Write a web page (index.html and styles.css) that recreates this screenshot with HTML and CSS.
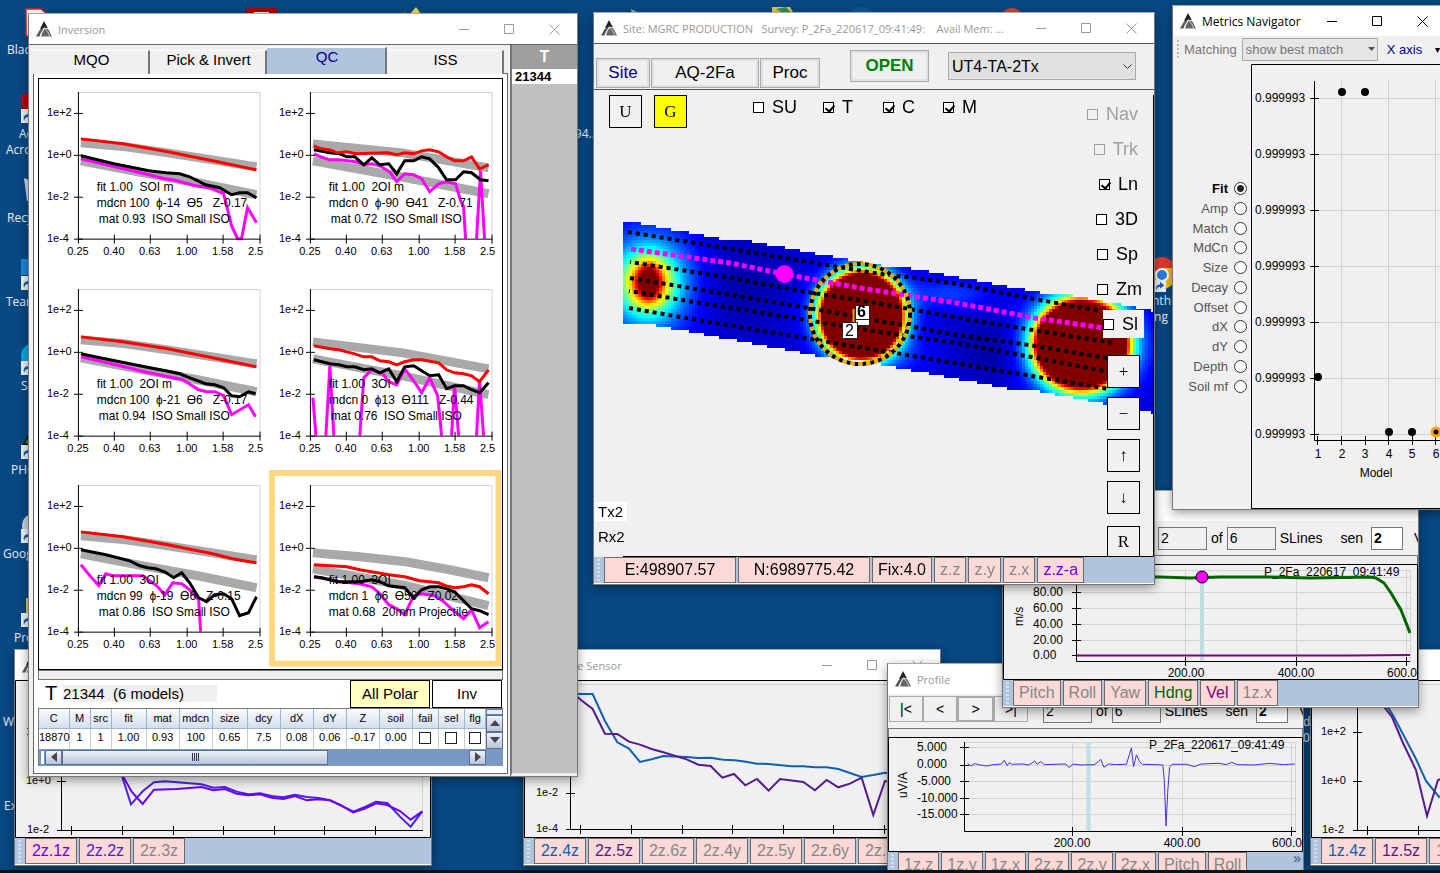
FILE: index.html
```
<!DOCTYPE html>
<html lang="en">
<head>
<meta charset="utf-8">
<title>Survey workspace</title>
<link rel="stylesheet" href="styles.css">
</head>
<body>
<svg class="defs" aria-hidden="true">
  <symbol id="logo" viewBox="0 0 16 16"><path d="M8 0L12 7.500L8.500 6.500L5 8.500L4.200 7.500Z" fill="#222"/><path d="M4 8.500L8.500 7.300Q5 10 3.500 15.500H0Z" fill="#555"/><path d="M9 7.500L12.500 8.500L16 15.500H5Q6 10.500 9 7.500Z" fill="#666"/><path d="M9 8Q12 10 14 15.500" fill="none" stroke="#ddd" stroke-width=".8"/></symbol>
  <symbol id="min" viewBox="0 0 11 11"><path d="M0 5.500H10" stroke="currentColor"/></symbol>
  <symbol id="max" viewBox="0 0 11 11"><path d="M.5 .5H9.500V9.500H.5Z" fill="none" stroke="currentColor"/></symbol>
  <symbol id="close" viewBox="0 0 11 11"><path d="M.5 .5L10.500 10.500M10.500 .5L.5 10.500" stroke="currentColor"/></symbol>
  <symbol id="shortcut" viewBox="0 0 14 14"><path d="M0 0H14V14H0Z" fill="#eef2f6"/><path d="M3 12Q1 6 7 5V2L12 6.500L7 10V8Q4 8 3 12Z" fill="#1d5f9f"/></symbol>
</svg>

<main class="desktop">
  <svg class="wallpaper-icons" viewBox="0 0 1440 873" width="1440" height="873" aria-hidden="true">
    <path d="M26 9H41L48 15V36H26Z" fill="#fff" stroke="#d22" stroke-width="1.500"/>
    <path d="M246 8H277V14H246Z" fill="#b00000"/><path d="M254 12H269V14H254Z" fill="#eee"/>
    <path d="M410 14L416 7L421 14Z" fill="#f0d840"/><path d="M401 14L405 12L407 14Z" fill="#d07a20"/>
    <path d="M631 9L641 14H632Z" fill="#9bb"/><path d="M772 7H790L794 14H772Z" fill="#e8c440"/><path d="M776 9L786 7L792 14H785Z" fill="#3b8f4a"/>
    <circle cx="862" cy="22" r="15" fill="#0a5a92"/><circle cx="1012" cy="20" r="12" fill="#e33b2e"/>
    <path d="M22 98Q22 93 28 93V110H22Z" fill="#b00"/><use href="#shortcut" x="21" y="109" width="14" height="14"/>
    <path d="M24 178L29 180V201H27Z" fill="#cde"/><path d="M21 259H29V275H21Z" fill="#1a86dd"/><use href="#shortcut" x="21" y="276" width="14" height="14"/>
    <circle cx="34" cy="356" r="13" fill="#00a8e8"/><use href="#shortcut" x="21" y="361" width="14" height="14"/>
    <path d="M22 446L29 433V446Z" fill="#111"/><path d="M25 443L29 437V444Z" fill="#3c8b20"/><use href="#shortcut" x="21" y="445" width="14" height="14"/>
    <circle cx="35" cy="526" r="13" fill="#ccd3da"/><use href="#shortcut" x="21" y="529" width="14" height="14"/>
    <path d="M26 598H30V616H26Z" fill="#e8c860"/><use href="#shortcut" x="21" y="613" width="14" height="14"/>
    <circle cx="1162" cy="275" r="14" fill="#f2bd1d"/><path d="M1148 275A14 14 0 0 1 1176 268H1162Z" fill="#e33b2e"/><circle cx="1162" cy="275" r="6" fill="#2c7de0" stroke="#fff" stroke-width="2"/>
    <use href="#shortcut" x="1154" y="280" width="12" height="12"/>
    <g class="icon-labels">
      <text x="7" y="54">Blackb</text><text x="19" y="138">Ad</text><text x="6" y="154">Acrob</text><text x="7" y="222">Recycle</text>
      <text x="6" y="306">Team</text><text x="21" y="390">Sk</text><text x="11" y="474">PHO</text><text x="3" y="558">Google</text>
      <text x="14" y="642">Pro</text><text x="3" y="726">W</text><text x="4" y="810">Ex</text>
      <text x="568" y="138">194...</text><text x="1146" y="305">ynth</text><text x="1151" y="321">ing</text><text x="1303" y="726">d</text><text x="1303" y="742">0</text>
    </g>
  </svg>

  <section class="window w-left">
    <header class="titlebar"><svg class="logo"><use href="#logo"/></svg><h2>Dual Sensor</h2></header>
    <svg class="plot" viewBox="15 680 416 158">
      <path class="frame" d="M15.500 680.500H430.500V837.500H15.500Z"/>
      <path class="light" d="M422.500 685V829"/>
      <path class="axis" d="M61.500 685V830.500H423M57 732.500H66M57 781.500H66M57 830.500H66M71.500 826V835M122.500 826V835M173.500 826V835M223.500 826V835M274.500 826V835M324.500 826V835M375.500 826V835"/>
      <text x="26" y="735">1e+2</text><text x="26" y="784">1e+0</text><text x="27" y="833">1e-2</text>
      <g class="trace" transform="translate(0 670) scale(.3333)">
        <polyline stroke="#4a22dd" points="360,290 368,325 393,403 428,364 462,337 495,334 605,343 640,353 675,351 710,365 745,373 780,370 815,378 850,382 885,374 920,381 955,384 990,391 1023,406 1060,425 1095,411 1128,395 1162,399 1200,440 1232,470 1267,424"/>
        <polyline stroke="#6a00ff" points="360,290 370,320 395,365 428,402 462,359 530,357 605,351 640,361 675,357 710,371 745,376 780,373 815,383 850,387 885,378 920,391 955,388 990,391 1023,406 1060,427 1095,416 1128,400 1162,405 1200,423 1232,449 1267,424"/>
      </g>
    </svg>
    <div class="strip"><i class="grip"></i><button class="chip w52 c-violet">2z.1z</button><button class="chip w52 c-indigo">2z.2z</button><button class="chip w52">2z.3z</button></div>
  </section>

  <section class="window w-sensor">
    <header class="titlebar"><svg class="logo"><use href="#logo"/></svg><h2>Single Sensor</h2>
      <div class="controls"><button aria-label="Minimize"><svg><use href="#min"/></svg></button><button aria-label="Maximize"><svg><use href="#max"/></svg></button><button aria-label="Close"><svg><use href="#close"/></svg></button></div></header>
    <svg class="plot" viewBox="524 680 416 158">
      <path class="frame" d="M524.500 680.500H939.500V837.500H524.500Z"/>
      <path class="light" d="M571 684.500H940"/>
      <path class="axis" d="M570.500 685V829.500H940M566 793.500H575M566 829.500H571M580.500 825V834M631.500 825V834M682.500 825V834M732.500 825V834M783.500 825V834M833.500 825V834M884.500 825V834"/>
      <text x="536" y="796">1e-2</text><text x="536" y="832">1e-4</text>
      <g class="trace" transform="translate(430 640) scale(.3333)">
        <polyline stroke="#1160ae" points="380,162 488,162 525,243 562,307 597,326 630,366 665,358 700,348 770,351 805,354 842,353 880,359 915,361 948,365 980,371 1015,372 1085,379 1120,379 1155,382 1190,382 1225,387 1295,411 1330,405 1365,398 1400,403"/>
        <polyline stroke="#551a8b" points="430,160 453,180 488,207 525,281 562,282 597,305 630,314 665,327 700,337 770,358 805,374 842,378 877,413 912,402 946,436 981,417 1016,452 1050,417 1120,426 1155,451 1190,420 1225,442 1260,431 1295,413 1330,525 1365,423 1400,428"/>
      </g>
    </svg>
    <div class="strip"><i class="grip"></i><button class="chip w52 c-blue">2z.4z</button><button class="chip w52 c-purple">2z.5z</button><button class="chip w52">2z.6z</button><button class="chip w52">2z.4y</button><button class="chip w52">2z.5y</button><button class="chip w52">2z.6y</button><button class="chip w52">2z.4x</button></div>
  </section>

  <section class="window w-right">
    <header class="titlebar"></header>
    <svg class="plot" viewBox="1311 680 416 158">
      <path class="frame" d="M1311.500 680.500H1726V837.500H1311.500Z"/>
      <path class="light" d="M1358 684.500H1700"/>
      <path class="axis" d="M1357.500 685V830.500H1700M1353 732.500H1362M1353 781.500H1362M1353 830.500H1358M1367.500 826V835M1418.500 826V835"/>
      <text x="1321" y="735">1e+2</text><text x="1321" y="784">1e+0</text><text x="1322" y="833">1e-2</text>
      <polyline class="line2" stroke="#1160ae" points="1380,700 1389,709 1394,717 1416,759 1426,781 1439,797 1450,790"/>
      <polyline class="line2" stroke="#551a8b" points="1380,700 1385,708 1392,717 1403,743 1416,770 1427,816 1438,780 1450,776"/>
    </svg>
    <div class="strip"><i class="grip"></i><button class="chip w52 c-blue">1z.4z</button><button class="chip w52 c-purple">1z.5z</button><button class="chip w52">1z.6z</button></div>
  </section>

  <section class="window w-profile-a">
    <header class="titlebar"><svg class="logo"><use href="#logo"/></svg><h2>Profile</h2></header>
    <div class="nav">
      <div class="steps"><button>|&lt;</button><button>&lt;</button><button class="focus">&gt;</button><button>&gt;|</button></div>
      <input class="num" value="2" aria-label="Line"><span>of</span><input class="num" value="6" aria-label="Total"><span>SLines</span><label class="sen" for="sen-a">sen</label><input id="sen-a" class="num sensor" value="2"><span class="cut">V</span>
    </div>
    <div class="splitter"></div>
    <svg class="plot" viewBox="888 737 415 115">
      <path class="frame" d="M888.500 737.500H1302.500V851.500H888.500Z"/>
      <path class="light" d="M965 742.500H1296M1295.500 742V831M965 747.500H1296M965 765.500H1296M965 781.500H1296M965 798.500H1296M965 814.500H1296M1072.500 742V831M1182.500 742V831M1291.500 742V831"/>
      <path class="cursor" d="M1088.500 742V831"/>
      <path class="axis" d="M964.500 742V831.500H1296M960 747.500H969M960 765.500H969M960 781.500H969M960 798.500H969M960 814.500H969M1072.500 827V836M1182.500 827V836M1291.500 827V836"/>
      <g class="big"><text x="917" y="751">5.000</text><text x="917" y="768">0.000</text><text x="917" y="785">-5.000</text><text x="917" y="802">-10.000</text><text x="917" y="818">-15.000</text>
      <text x="1072" y="847" text-anchor="middle">200.00</text><text x="1182" y="847" text-anchor="middle">400.00</text><text x="1272" y="847">600.00</text>
      <text x="1149" y="749">P_2Fa_220617_09:41:49</text><text transform="translate(907 798) rotate(-90)">uV/A</text></g>
      <g class="trace thin" transform="translate(880 480) scale(.3571 .3333)"><polyline stroke="#4b2bd8" points="245,850 255,858 265,851 280,855 300,858 310,855 340,852 348,841 356,857 362,848 370,853 400,852 415,855 425,850 433,843 440,853 450,845 460,854 520,852 530,863 540,852 560,855 600,854 612,845 618,838 627,862 640,852 660,854 690,853 698,825 704,804 710,860 718,825 727,845 735,853 770,854 792,855 796,900 801,1038 806,930 811,862 818,853 860,853 880,860 900,852 950,850 970,854 985,847 1000,854 1050,855 1090,850 1130,854 1162,852"/></g>
    </svg>
    <div class="strip"><i class="grip"></i><button class="chip">1z.z</button><button class="chip">1z.y</button><button class="chip">1z.x</button><button class="chip">2z.z</button><button class="chip">2z.y</button><button class="chip">2z.x</button><button class="chip">Pitch</button><button class="chip">Roll</button><span class="more">»</span></div>
  </section>

  <section class="window w-profile-b">
    <header class="titlebar"><svg class="logo"><use href="#logo"/></svg><h2>Profile</h2></header>
    <div class="nav">
      <div class="steps"><button>|&lt;</button><button>&lt;</button><button class="focus">&gt;</button><button>&gt;|</button></div>
      <input class="num" value="2" aria-label="Line"><span>of</span><input class="num" value="6" aria-label="Total"><span>SLines</span><label class="sen" for="sen-b">sen</label><input id="sen-b" class="num sensor" value="2"><span class="cut">V</span>
    </div>
    <div class="splitter"></div>
    <svg class="plot" viewBox="1003 564 415 116">
      <path class="frame" d="M1003.500 564.500H1417.500V679.500H1003.500Z"/>
      <path class="light" d="M1077 570.500H1410M1410.500 570V661M1077 577.500H1410M1077 592.500H1410M1077 608.500H1410M1077 624.500H1410M1077 640.500H1410M1077 655.500H1410M1185.500 570V661M1296.500 570V661M1406.500 570V661"/>
      <path class="cursor" d="M1202 570V661"/>
      <path class="axis" d="M1076.500 570V661.500H1410M1072 592.500H1081M1072 608.500H1081M1072 624.500H1081M1072 640.500H1081M1072 655.500H1081M1185.500 657V666M1296.500 657V666M1406.500 657V666"/>
      <g class="big"><text x="1033" y="596">80.00</text><text x="1033" y="612">60.00</text><text x="1033" y="628">40.00</text><text x="1033" y="644">20.00</text><text x="1033" y="659">0.00</text>
      <text x="1186" y="677" text-anchor="middle">200.00</text><text x="1296" y="677" text-anchor="middle">400.00</text><text x="1387" y="677">600.00</text>
      <text x="1264" y="576">P_2Fa_220617_09:41:49</text><text transform="translate(1023 626) rotate(-90)">m/s</text></g>
      <polyline class="line3" stroke="#006400" points="1077,577 1160,577 1190,578 1220,577 1270,577 1310,578 1370,577 1376,578 1384,583 1391,593 1401,610 1410,633"/>
      <path class="line2" stroke="#800080" d="M1077 655.500H1350L1410 655"/>
      <circle cx="1202" cy="577" r="6" fill="#f0f" stroke="#000"/>
    </svg>
    <div class="strip"><i class="grip"></i><button class="chip">Pitch</button><button class="chip">Roll</button><button class="chip">Yaw</button><button class="chip c-green">Hdng</button><button class="chip c-plum">Vel</button><button class="chip">1z.x</button></div>
  </section>

  <section class="window w-inversion">
    <header class="titlebar"><svg class="logo"><use href="#logo"/></svg><h2>Inversion</h2>
      <div class="controls"><button aria-label="Minimize"><svg><use href="#min"/></svg></button><button aria-label="Maximize"><svg><use href="#max"/></svg></button><button aria-label="Close"><svg><use href="#close"/></svg></button></div></header>
    <div class="inv-body">
      <div class="inv-main">
        <nav class="tabs"><button>MQO</button><button>Pick &amp; Invert</button><button class="active">QC</button><button>ISS</button></nav>
        <div class="inv-panel">
          <div class="charts" id="charts"></div>
          <div class="splitter"></div>
          <div class="target-row"><span class="tee">T</span><span class="target">21344&nbsp; (6 models)</span><button class="flat yellow">All Polar</button><button class="flat">Inv</button></div>
          <div class="grid-wrap">
            <table class="models">
              <colgroup><col class="c30"><col class="c21"><col class="c21"><col class="c35"><col class="c33"><col class="c33"><col class="c35"><col class="c33"><col class="c33"><col class="c33"><col class="c33"><col class="c33"><col class="c26"><col class="c26"><col class="c21"></colgroup>
              <thead><tr><th>C</th><th>M</th><th>src</th><th>fit</th><th>mat</th><th>mdcn</th><th>size</th><th>dcy</th><th>dX</th><th>dY</th><th>Z</th><th>soil</th><th>fail</th><th>sel</th><th>flg</th></tr></thead>
              <tbody><tr><td>18870</td><td>1</td><td>1</td><td>1.00</td><td>0.93</td><td>100</td><td>0.65</td><td>7.5</td><td>0.08</td><td>0.06</td><td>-0.17</td><td>0.00</td><td><input type="checkbox" aria-label="fail"></td><td><input type="checkbox" aria-label="sel"></td><td><input type="checkbox" aria-label="flg"></td></tr></tbody>
            </table>
            <div class="vscroll"><i></i><button aria-label="Up"><svg viewBox="0 0 10 6"><path d="M0 6L5 0L10 6Z"/></svg></button><button aria-label="Down"><svg viewBox="0 0 10 6"><path d="M0 0H10L5 6Z"/></svg></button></div>
            <div class="hscroll"><i></i><button aria-label="Left"><svg viewBox="0 0 6 10"><path d="M6 0V10L0 5Z"/></svg></button><div class="thumb"><i></i><i></i><i></i><i></i></div><button class="end" aria-label="Right"><svg viewBox="0 0 6 10"><path d="M0 0V10L6 5Z"/></svg></button></div>
          </div>
        </div>
      </div>
      <aside class="inv-targets"><h3>T</h3><p>21344</p></aside>
    </div>
  </section>

  <section class="window w-metrics">
    <header class="titlebar dark"><svg class="logo"><use href="#logo"/></svg><h2>Metrics Navigator</h2>
      <div class="controls"><button aria-label="Minimize"><svg><use href="#min"/></svg></button><button aria-label="Maximize"><svg><use href="#max"/></svg></button><button aria-label="Close"><svg><use href="#close"/></svg></button></div></header>
    <div class="met-bar"><i class="grip"></i><label for="match">Matching</label><div class="drop"><select id="match"><option>show best match</option></select><svg viewBox="0 0 7 4"><path d="M0 0H7L3.500 4Z" fill="#555"/></svg></div><button class="xaxis">X axis</button><span class="met-more">▾</span></div>
    <div class="met-body">
      <form class="radios">
        <label class="on">Fit<input type="radio" name="m" checked></label><label>Amp<input type="radio" name="m"></label><label>Match<input type="radio" name="m"></label><label>MdCn<input type="radio" name="m"></label><label>Size<input type="radio" name="m"></label><label>Decay<input type="radio" name="m"></label><label>Offset<input type="radio" name="m"></label><label>dX<input type="radio" name="m"></label><label>dY<input type="radio" name="m"></label><label>Depth<input type="radio" name="m"></label><label>Soil mf<input type="radio" name="m"></label>
      </form>
      <svg class="plot met-plot" viewBox="1251 64 194 445">
        <path class="frame" d="M1251.500 64.500H1460V508.500H1251.500Z"/>
        <path class="light" d="M1315 98.500H1445M1315 154.500H1445M1315 210.500H1445M1315 266.500H1445M1315 322.500H1445M1315 378.500H1445M1315 434.500H1445M1341.500 81V440M1388.500 81V440M1435.500 81V440"/>
        <path class="axis" d="M1314.500 81V440.500H1445M1310 98.500H1319M1310 154.500H1319M1310 210.500H1319M1310 266.500H1319M1310 322.500H1319M1310 378.500H1319M1310 434.500H1319M1317.500 436V445M1341.500 436V445M1365.500 436V445M1388.500 436V445M1412.500 436V445M1435.500 436V445"/>
        <g class="big"><text x="1255" y="102">0.999993</text><text x="1255" y="158">0.999993</text><text x="1255" y="214">0.999993</text><text x="1255" y="270">0.999993</text><text x="1255" y="326">0.999993</text><text x="1255" y="382">0.999993</text><text x="1255" y="438">0.999993</text></g>
        <g text-anchor="middle" class="big"><text x="1318" y="458">1</text><text x="1342" y="458">2</text><text x="1365" y="458">3</text><text x="1389" y="458">4</text><text x="1412" y="458">5</text><text x="1436" y="458">6</text><text x="1376" y="477">Model</text></g>
        <circle cx="1318" cy="377" r="4"/><circle cx="1342" cy="92" r="4"/><circle cx="1365" cy="92" r="4"/><circle cx="1389" cy="432" r="4"/><circle cx="1412" cy="432" r="4"/><circle cx="1436" cy="432" r="4" stroke="#ffa500" stroke-width="3"/>
      </svg>
    </div>
  </section>

  <section class="window w-site">
    <header class="titlebar"><svg class="logo"><use href="#logo"/></svg><h2>Site: MGRC PRODUCTION &nbsp; Survey: P_2Fa_220617_09:41:49: &nbsp;&nbsp; Avail Mem: ...</h2>
      <div class="controls"><button aria-label="Minimize"><svg><use href="#min"/></svg></button><button aria-label="Maximize"><svg><use href="#max"/></svg></button><button aria-label="Close"><svg><use href="#close"/></svg></button></div></header>
    <div class="site-bar"><button class="raised navy">Site</button><button class="raised wide">AQ-2Fa</button><button class="raised mid">Proc</button><button class="raised open">OPEN</button>
      <div class="drop sensor-drop"><select class="sensor-select" aria-label="Sensor"><option>UT4-TA-2Tx</option></select><svg viewBox="0 0 9 5"><path d="M.5 .5L4.500 4.500L8.500 .5" fill="none" stroke="#333"/></svg></div></div>
    <div class="map">
      <canvas id="heat" width="560" height="467"></canvas>
      <svg class="map-lines" viewBox="594 90 560 467">
        <path d="M1153.500 95V556.500H623" fill="none" stroke="#000"/>
        <g class="dots"><polyline points="628,232 689,242 779,257 868,272 952,283 1029,298 1100,311"/><polyline points="630,262 732,278 807,292 864,301 989,323 1114,343"/><polyline points="630,278 714,292 814,309 957,335 1029,345 1107,358"/><polyline points="629,291 700,303 775,315 886,333 957,343 1105,371"/><polyline points="629,308 680,317 793,336 846,345 907,355 1109,389"/></g>
        <polyline class="dots pink" points="631,249 730,263 784,274 860,288 957,303 1035,318 1104,328"/>
        <circle cx="784.500" cy="274" r="9" fill="#f0f"/>
        <circle cx="860" cy="314" r="50" fill="none" stroke="#000" stroke-width="4" stroke-dasharray="4 4"/><circle cx="860" cy="314" r="50" fill="none" stroke="#ffa500" stroke-width="4" stroke-dasharray="4 4" stroke-dashoffset="4"/>
        <path d="M855.500 305.500H869.500V325.500H855.500Z" fill="#fff" stroke="#222"/><path d="M855.500 319.500H869.500" stroke="#222"/><path d="M853.500 309V322" stroke="#ffa500" stroke-width="2"/>
        <path d="M842.500 322.500H857.500V338.500H842.500Z" fill="#fff" stroke="#222"/>
        <text x="857" y="317" font-weight="bold">6</text><text x="845" y="336">2</text>
      </svg>
      <div class="map-ui">
        <div class="map-top"><button class="key">U</button><button class="key yellow-key">G</button>
          <div class="checks"><label><input type="checkbox">SU</label><label><input type="checkbox" checked>T</label><label><input type="checkbox" checked>C</label><label><input type="checkbox" checked>M</label></div></div>
        <div class="map-foot"><label class="tx">Tx2</label><label>Rx2</label></div>
        <div class="map-side">
          <label class="off"><input type="checkbox" disabled>Nav</label><label class="off"><input type="checkbox" disabled>Trk</label><label><input type="checkbox" checked>Ln</label><label><input type="checkbox">3D</label><label><input type="checkbox">Sp</label><label class="zm"><input type="checkbox">Zm</label><label class="solid"><input type="checkbox">Sl</label>
          <div class="keys"><button class="key">+</button><button class="key">−</button><button class="key">↑</button><button class="key">↓</button><button class="key last">R</button></div>
        </div>
      </div>
    </div>
    <div class="strip"><i class="grip"></i><button class="chip w132 c-black">E:498907.57</button><button class="chip w132 c-black">N:6989775.42</button><button class="chip c-black">Fix:4.0</button><button class="chip">z.z</button><button class="chip">z.y</button><button class="chip">z.x</button><button class="chip c-violet">z.z-a</button></div>
  </section>
  <div class="taskbar"></div>
</main>
<script src="app.js"></script>
</body>
</html>
```

FILE: styles.css
```
* { box-sizing: border-box; }
body { margin: 0; font-family: "Liberation Sans", Arial, sans-serif; font-size: 12px; color: #000; }
button, input, select { font: inherit; color: inherit; margin: 0; padding: 0; border-radius: 0; }
h2, h3, p { margin: 0; font-weight: normal; }
.defs { position: absolute; width: 0; height: 0; }
.desktop { position: relative; height: 100vh; overflow: hidden; background: #084883; }
.wallpaper-icons { position: absolute; left: 0; top: 0; }
.icon-labels { font: 12px "Open Sans", "Noto Sans", sans-serif; fill: #e8eef5; }
.taskbar { position: absolute; left: 0; right: 0; bottom: 0; height: 3px; background: #101010; }

.window { position: absolute; background: #f0f0f0; border: 1px solid #777; border-top-color: #aaa; box-shadow: 0 3px 10px rgba(0, 0, 0, .4); }
.w-left { left: 14px; top: 649px; width: 418px; }
.w-sensor { left: 523px; top: 649px; width: 418px; }
.w-right { left: 1310px; top: 649px; width: 418px; }
.w-profile-a { left: 887px; top: 663px; width: 417px; }
.w-profile-b { left: 1002px; top: 490px; width: 417px; }
.w-inversion { left: 28px; top: 13px; width: 550px; }
.w-metrics { left: 1172px; top: 5px; width: 274px; }
.w-site { left: 593px; top: 12px; width: 562px; }

.titlebar { display: flex; align-items: center; height: 30px; background: #fff; color: #999; }
.titlebar h2 { flex: 1; min-width: 0; overflow: hidden; font: 11px "Open Sans", "Noto Sans", sans-serif; white-space: nowrap; }
.titlebar.dark { color: #000; }
.titlebar.dark h2 { font-size: 12px; }
.logo { width: 16px; height: 16px; margin: 0 6px 0 7px; flex: none; }
.controls { display: flex; }
.controls button { width: 45px; height: 30px; border: 0; background: none; }
.controls svg { width: 11px; height: 11px; display: block; margin: auto; }

.plot { display: block; width: 100%; height: auto; font-size: 11px; }
.plot .big { font-size: 12px; }
.frame { fill: #f0f0f0; stroke: #000; }
.axis { fill: none; stroke: #000; }
.light { fill: none; stroke: #d3d3d3; }
.cursor { stroke: #bfdfdf; stroke-width: 4; }
.trace { fill: none; stroke-width: 6; }
.thin polyline { stroke-width: 1; vector-effect: non-scaling-stroke; }
.line2 { fill: none; stroke-width: 2; }
.line3 { fill: none; stroke-width: 3; }

.strip { display: flex; gap: 2px; height: 27px; background: #b0c4de; border-bottom: 1px solid #fff; overflow: hidden; }
.grip { width: 3px; height: 22px; margin: 2px 2px 2px 3px; flex: none; background: repeating-linear-gradient(#d4dfee 0 2px, transparent 2px 4px); }
.chip { height: 26px; padding: 0 5px; border: 1px solid #696969; background: #fad9d7; color: #868686; font-size: 16px; flex: none; white-space: nowrap; }
.w52 { width: 52px; }
.w132 { width: 132px; }
.c-violet { color: #6a00ff; }
.c-indigo { color: #4a22dd; }
.c-blue { color: #1160ae; }
.c-purple { color: #551a8b; }
.c-green { color: #006400; }
.c-plum { color: #800080; }
.c-black { color: #000; }
.more { margin-left: auto; padding-right: 2px; color: #3a4d80; font-size: 14px; line-height: 12px; }
.splitter { height: 9px; border: 1px solid #777; border-bottom: 0; background: #eee; }

.nav { display: flex; align-items: center; gap: 4px; height: 34px; padding: 0 1px; font-size: 14px; overflow: hidden; }
.steps { display: flex; margin: -4px 11px 0 0; }
.steps button { width: 34px; height: 26px; border: 1px solid #aaa; background: #f0f0f0; font-size: 14px; }
.steps .focus { width: 37px; border: 2px solid #aaa; }
.num { width: 49px; height: 23px; border: 1px solid #777; background: #f0f0f0; padding: 0 2px; flex: none; }
.sen { margin-left: 14px; }
.sensor { width: 32px; margin-left: 4px; background: #fff; font-weight: bold; }
.cut { margin-left: 7px; }

.drop { display: grid; align-items: center; }
.drop > * { grid-area: 1 / 1; }
.drop select { appearance: none; width: 100%; padding: 0 3px; border: 1px solid #aaa; }
.drop svg { width: 9px; height: 5px; margin-right: 4px; justify-self: end; pointer-events: none; }

.inv-body { display: flex; border-top: 1px solid #666; }
.inv-main { width: 482px; padding: 2px 2px 2px 4px; border-right: 1px solid #777; }
.tabs { display: grid; grid-template-columns: 117px 117px 120px 117px; align-items: end; height: 26px; }
.tabs button { height: 24px; padding: 0 0 7px 2px; border: 0; border-right: 2px solid #777; border-top: 1px solid #fff; background: #f0f0f0; font-size: 15px; }
.tabs .active { height: 27px; background: #b0c4de; color: #00008b; padding-bottom: 9px; }
.inv-panel { border: 1px solid #666; background: #fff; padding: 4px; }
.charts { display: grid; grid-template-columns: 1fr 1fr; border: 1px solid #000; }
.chart { display: block; width: 100%; height: auto; overflow: visible; font-size: 11px; }
.chart .note { font-size: 12px; }
.series { fill: none; stroke-width: 3; }
.band { fill: none; stroke: #a9a9a9; stroke-width: 9; }
.target-row { display: flex; align-items: center; gap: 2px; padding: 0 1px 0 7px; border-top: 1px solid #777; }
.tee { font-size: 20px; width: 16px; }
.target { width: 154px; margin-right: auto; background: #f0f0f0; font-size: 15px; line-height: 17px; white-space: nowrap; }
.flat { width: 70px; height: 28px; border: 1px solid #000; background: #fff; font-size: 15px; }
.flat.yellow { width: 80px; background: #ffffc0; }
.grid-wrap { display: grid; grid-template-columns: 1fr 17px; border: 1px solid #777; border-width: 1px 0 0 1px; margin-bottom: 3px; }
.models { width: 100%; table-layout: fixed; border-collapse: collapse; font-size: 11px; }
.models th, .models td { padding: 0; text-align: center; font-weight: normal; border-right: 1px solid #9eb6d0; white-space: nowrap; }
.models th { height: 20px; background: linear-gradient(#fafcfe, #d3deec); border-bottom: 1px solid #9eb6d0; }
.models td { height: 20px; padding-top: 2px; border-right-color: #ccc; vertical-align: top; }
.models input { appearance: none; width: 12px; height: 12px; border: 1px solid #222; display: block; margin: 1px auto 0; }
.c21 { width: 21px; } .c26 { width: 26px; } .c30 { width: 30px; } .c33 { width: 33px; } .c35 { width: 35px; }
.vscroll { display: grid; grid-template-rows: 6px 1fr 1fr; background: #a4bce0; }
.vscroll i { border: 1px solid #6080b0; background: #e8eef6; }
.vscroll button, .hscroll button { border: 1px solid #5a6f98; background: linear-gradient(#f0f3f8, #b8c4d8); display: grid; place-items: center; }
.vscroll svg { width: 10px; height: 6px; fill: #445; }
.hscroll { grid-column: 1 / 3; display: flex; height: 17px; padding: 1px 17px 1px 1px; background: #7799c4; }
.hscroll > i { width: 5px; border: 1px solid #6b93c0; background: #fff; }
.hscroll button { width: 17px; }
.hscroll svg { width: 6px; height: 10px; fill: #445; }
.hscroll .end { margin-left: auto; }
.thumb { display: flex; align-items: center; justify-content: center; gap: 1px; width: 266px; border: 1px solid #5a6f98; background: linear-gradient(#eef1f6, #b8c4d8); }
.thumb i { width: 1px; height: 8px; background: #335; }
.inv-targets { flex: 1; background: #c0c0c0; border-left: 1px solid #777; border-bottom: 3px solid #eee; }
.inv-targets h3 { height: 24px; line-height: 24px; background: #9f9f9f; color: #fff; text-align: center; font-size: 16px; font-weight: bold; }
.inv-targets p { height: 15px; padding-left: 3px; background: #fff; font-size: 13px; font-weight: bold; line-height: 15px; }

.met-bar { display: flex; align-items: center; height: 28px; gap: 5px; padding-bottom: 2px; font-size: 13px; color: #777; white-space: nowrap; }
.met-bar .grip { margin: 0 0 0 4px; height: 18px; background: repeating-linear-gradient(#bbb 0 2px, transparent 2px 4px); width: 2px; }
.met-bar .drop { width: 136px; }
.met-bar select { height: 23px; background: #e6e6e6; font-size: 13px; }
.met-bar .drop svg { width: 7px; height: 4px; margin-right: 3px; }
.xaxis { border: 0; background: none; color: #00008b; padding-left: 4px; }
.met-more { color: #000; font-size: 10px; padding-left: 8px; }
.met-body { display: flex; align-items: stretch; }
.radios { width: 78px; padding: 114px 4px 0 0; flex: none; }
.radios label { display: flex; align-items: center; justify-content: flex-end; gap: 6px; height: 20px; font-size: 13px; color: #555; }
.radios label:nth-child(4n) { height: 19px; }
.radios .on { color: #000; font-weight: bold; }
.radios input { appearance: none; width: 13px; height: 13px; border: 1px solid #333; border-radius: 50%; background: #fff; }
.radios input:checked { background: radial-gradient(#222 0 3px, #fff 4px); }
.met-plot { flex: 1; width: 194px; }

.site-bar { display: flex; align-items: flex-end; height: 47px; border-top: 1px solid #555; border-bottom: 1px solid #555; padding: 0 18px 1px 2px; gap: 1px; }
.raised { width: 54px; height: 30px; border: 1px solid #aaa; background: #f0f0f0; box-shadow: inset 0 0 0 2px #e1e1e1; font-size: 17px; }
.raised.wide { width: 108px; }
.raised.mid { width: 60px; }
.navy { color: #00008b; }
.raised.open { width: 79px; height: 32px; margin: 0 18px 6px 29px; color: #008000; font-weight: bold; }
.sensor-drop { flex: 1; margin-bottom: 8px; }
.sensor-select { height: 28px; background: #e1e1e1; font-size: 16px; }
.map { display: grid; }
.map > * { grid-area: 1 / 1; }
.map canvas, .map-lines { display: block; width: 100%; height: auto; }
.map-lines { font-size: 16px; }
.dots { fill: none; stroke: #000; stroke-width: 4; stroke-dasharray: 4 4; }
.dots polyline:nth-child(even) { stroke-dashoffset: 3; }
.pink { stroke: #f0f; stroke-width: 5; stroke-dasharray: 5 3; }
.map-ui { display: grid; grid-template-columns: 1fr auto; grid-template-rows: auto 1fr; font-size: 18px; overflow: hidden; }
.map-ui label { display: flex; align-items: center; gap: 8px; }
.map-ui input { appearance: none; width: 11px; height: 11px; border: 1px solid #000; background: #fff; position: relative; }
.map-ui input:checked::after { content: ""; position: absolute; left: 3px; top: 0; width: 4px; height: 7px; border: solid #000; border-width: 0 2px 2px 0; transform: rotate(40deg); }
.map-top { display: flex; align-items: flex-start; gap: 12px; padding: 5px 0 0 15px; }
.key { width: 33px; height: 33px; border: 1px solid #000; background: #f0f0f0; font: 17px "Liberation Serif", serif; }
.yellow-key { background: #ff0; }
.checks { display: grid; grid-template-columns: 70px 60px 60px 60px; margin: 2px 0 0 54px; }
.map-side { grid-column: 2; grid-row: 1 / 3; display: flex; flex-direction: column; align-items: flex-end; padding: 7px 10px 0 0; width: 90px; }
.map-side label { height: 35px; padding-right: 6px; }
.map-side .zm { padding-right: 2px; }
.map-side .off { color: #a0a0a0; }
.map-side .off input { border-color: #a0a0a0; background: none; }
.map-side .solid { height: 28px; margin-top: 3px; background: #f0f0f0; }
.keys { display: grid; gap: 9px; margin: 17px 4px 0 0; }
.keys .last { height: 30px; margin-top: 3px; border-bottom: 0; }
.map-foot { align-self: end; font-size: 15px; padding: 0 0 11px 1px; }
.map-foot label { width: 32px; height: 19px; padding-left: 3px; margin-top: 6px; }
.map-foot .tx { background: #fff; }
```

FILE: app.js
```
const bandHigh = '3,51 48,55 90,61 135,68 179,75';
const bandLow = '3,69 60,80 120,91 179,103';
const models = [
  { note: ['fit 1.00  SOI m', 'mdcn 100  ϕ-14  Ө5   Z-0.17', 'mat 0.93  ISO Small ISO'], bands: [bandHigh, bandLow],
    red: '3,47 45,52 90,60 135,69 179,78',
    black: '3,64 36,72 71,79 88,81 102,82 112,85 128,93 142,96 154,103 162,101 170,101 179,106',
    pink: '3,67 71,83 87,87 95,88 118,94 132,96 146,102 154,134 160,147 164,147 170,116 179,131' },
  { note: ['fit 1.00  2OI m', 'mdcn 0  ϕ-90  Ө41   Z-0.71', 'mat 0.72  ISO Small ISO'], bands: ['3,52 93,61 179,76', '3,69 91,85 179,102'],
    red: '4,54 11,57 20,58 28,61 37,60 46,62 78,61 87,63 95,61 104,62 112,59 120,58 129,60 137,65 145,69 154,69 162,65 170,77 179,73',
    black: '4,58 20,61 30,62 37,65 45,65 54,73 62,66 70,73 79,72 87,82 95,69 104,69 112,65 120,67 129,76 137,88 146,88 154,80 162,81 171,88 179,89',
    pink: '4,62 11,65 20,68 29,68 46,70 54,73 62,72 70,74 80,80 87,90 95,82 104,83 112,87 120,100 129,92 137,90 146,92 151,109 154,115 156,147 M167,147 171,79 175,147' },
  { note: ['fit 1.00  2OI m', 'mdcn 100  ϕ-21  Ө6   Z-0.17', 'mat 0.94  ISO Small ISO'], bands: [bandHigh, bandLow],
    red: '3,48 45,53 90,60 135,69 179,78',
    black: '3,65 22,69 72,79 88,82 102,85 112,89 128,95 137,96 146,99 154,107 162,108 171,103 178,105',
    pink: '3,68 55,80 62,82 105,91 113,96 121,101 129,103 137,103 146,107 154,126 171,116 178,128' },
  { note: ['fit 1.00  3OI', 'mdcn 0  ϕ13  Ө111   Z-0.44', 'mat 0.76  ISO Small ISO'], bands: ['3,53 93,64 179,80', '3,70 93,87 179,106'],
    red: '4,57 20,60 29,61 37,63 45,65 54,68 62,68 70,72 79,73 87,76 95,73 104,71 112,71 129,74 137,81 145,84 154,85 162,87 170,93 179,81',
    black: '4,71 20,75 29,76 37,78 45,78 54,81 62,80 70,84 79,80 87,93 95,78 104,77 112,82 120,87 129,86 137,100 145,97 154,97 162,101 170,104 179,94',
    pink: '3,109 6,147 M16,147 20,77 24,147 M50,147 54,89 62,81 73,85 79,93 87,96 95,80 104,92 112,104 120,89 128,107 132,147 M142,147 145,96 149,147 M167,147 170,91 174,147' },
  { note: ['fit 1.00  3OI', 'mdcn 99  ϕ-19  Ө6   Z-0.15', 'mat 0.86  ISO Small ISO'], bands: [bandHigh, bandLow],
    red: '3,47 45,52 90,60 135,69 155,74 179,78',
    black: '3,65 28,70 52,76 62,81 70,83 78,84 87,87 96,93 104,88 112,98 121,113 129,117 137,110 146,109 154,114 162,131 171,128 179,112',
    pink: '3,80 12,91 21,101 28,89 35,91 65,91 72,96 79,101 87,110 95,98 104,99 112,105 121,115 123,147' },
  { selected: true, note: ['fit 1.00  3OI', 'mdcn 1  ϕ6  Ө59   Z0.02', 'mat 0.68  20mm Projectile'], bands: ['3,68 50,72 96,77 140,85 179,93', '3,84 96,101 179,121'],
    red: '4,80 37,82 50,85 79,90 95,92 110,96 129,98 136,101 145,103 154,102 162,100 170,102 179,109',
    black: '4,92 12,93 20,95 30,97 38,97 50,97 62,95 70,97 79,101 87,102 95,103 104,113 112,105 120,102 129,102 137,104 145,107 154,116 162,124 170,126 179,130',
    pink: '4,92 30,97 50,99 62,102 70,109 79,120 87,124 95,130 104,111 112,109 125,111 133,116 145,127 154,134 162,125 170,143 179,137' }
];

const xs = [0, 36, 72, 109, 145, 182];
const xNames = ['0.25', '0.40', '0.63', '1.00', '1.58', '2.5'];
const yNames = ['1e+2', '1e+0', '1e-2', '1e-4'];

// One decay plot: axes, modelled bands, measured channels and the fit summary.
function chart(m) {
  const line = (cls, color, pts) => `<path class="${cls}" stroke="${color}" d="M${pts}"/>`;
  let s = '<svg class="chart" viewBox="0 0 232 197">';
  if (m.selected) s += '<rect x="1" y="1" width="227" height="191" fill="none" stroke="#ffd780" stroke-width="6"/>';
  s += '<g transform="translate(39 13)"><path class="light" d="M0 .5H182.500V147"/>';
  s += m.bands.map(b => line('band', '#a9a9a9', b)).join('');
  s += line('series', '#f0f', m.pink) + line('series', '#000', m.black) + line('series', '#f00', m.red);
  let d = 'M.5 0V147.500H183';
  yNames.forEach((n, i) => {
    const y = 21 + i * 42;
    d += `M-4 ${y}.500H5`;
    s += `<text x="-31" y="${y + 3}">${n}</text>`;
  });
  xs.forEach((x, i) => {
    d += `M${x}.500 143V152`;
    s += `<text x="${i === 5 ? 178 : x}" y="163" text-anchor="middle">${xNames[i]}</text>`;
  });
  s += `<path class="axis" d="${d}"/>`;
  m.note.forEach((t, i) => {
    const x = i === 2 && !m.selected ? 21 : 19;
    s += `<text class="note" x="${x}" y="${99 + i * 16}">${t.replace(/ /g, '\u00a0')}</text>`;
  });
  return s + '</g></svg>';
}
document.getElementById('charts').innerHTML = models.map(chart).join('');

// Gridded response: three anomalies over a low background, jet colours.
const g = document.getElementById('heat').getContext('2d');
const spots = [
  { x: 647, y: 281, rx: 8, ry: 12, fall: 19 },
  { x: 860, y: 314, rx: 39, ry: 41, fall: 8 },
  { x: 1080, y: 343, rx: 44, ry: 42, fall: 10 }
];
const blob = (x, y, cx, cy, w, h) => Math.exp(-(((x - cx) / w) ** 2) - (((y - cy) / h) ** 2));
function value(x, y) {
  let v = 0.08 - 0.05 * blob(x, y, 730, 285, 50, 45) - 0.05 * blob(x, y, 990, 350, 32, 30) + 0.1 * blob(x, y, 950, 292, 40, 16) + 0.05 * blob(x, y, 900, 355, 40, 20);
  for (const s of spots) {
    const dx = x - s.x, dy = y - s.y, r = Math.hypot(dx, dy) || 1;
    const edge = 1 / Math.hypot(dx / r / s.rx, dy / r / s.ry);
    v += r < edge ? 1 : Math.exp(-(r - edge) / s.fall);
  }
  return Math.min(1, v);
}
function jet(v) {
  const c = k => Math.round(255 * Math.max(0, Math.min(1, 1.5 - Math.abs(4 * v - k))));
  return `rgb(${c(3)},${c(2)},${c(1)})`;
}
const step = 3;
for (let x = 623; x < 1153; x += step) {
  const top = 222 + Math.floor((x - 623) / 16) * 2.7;
  const bottom = 321 + Math.floor((x - 623) / 16) * 2.75;
  for (let y = 222; y < 414; y += step) {
    if (y < top - 1 || y > bottom) continue;
    g.fillStyle = jet(value(x, y));
    g.fillRect(x - 594, y - 90, step, step);
  }
}
```
